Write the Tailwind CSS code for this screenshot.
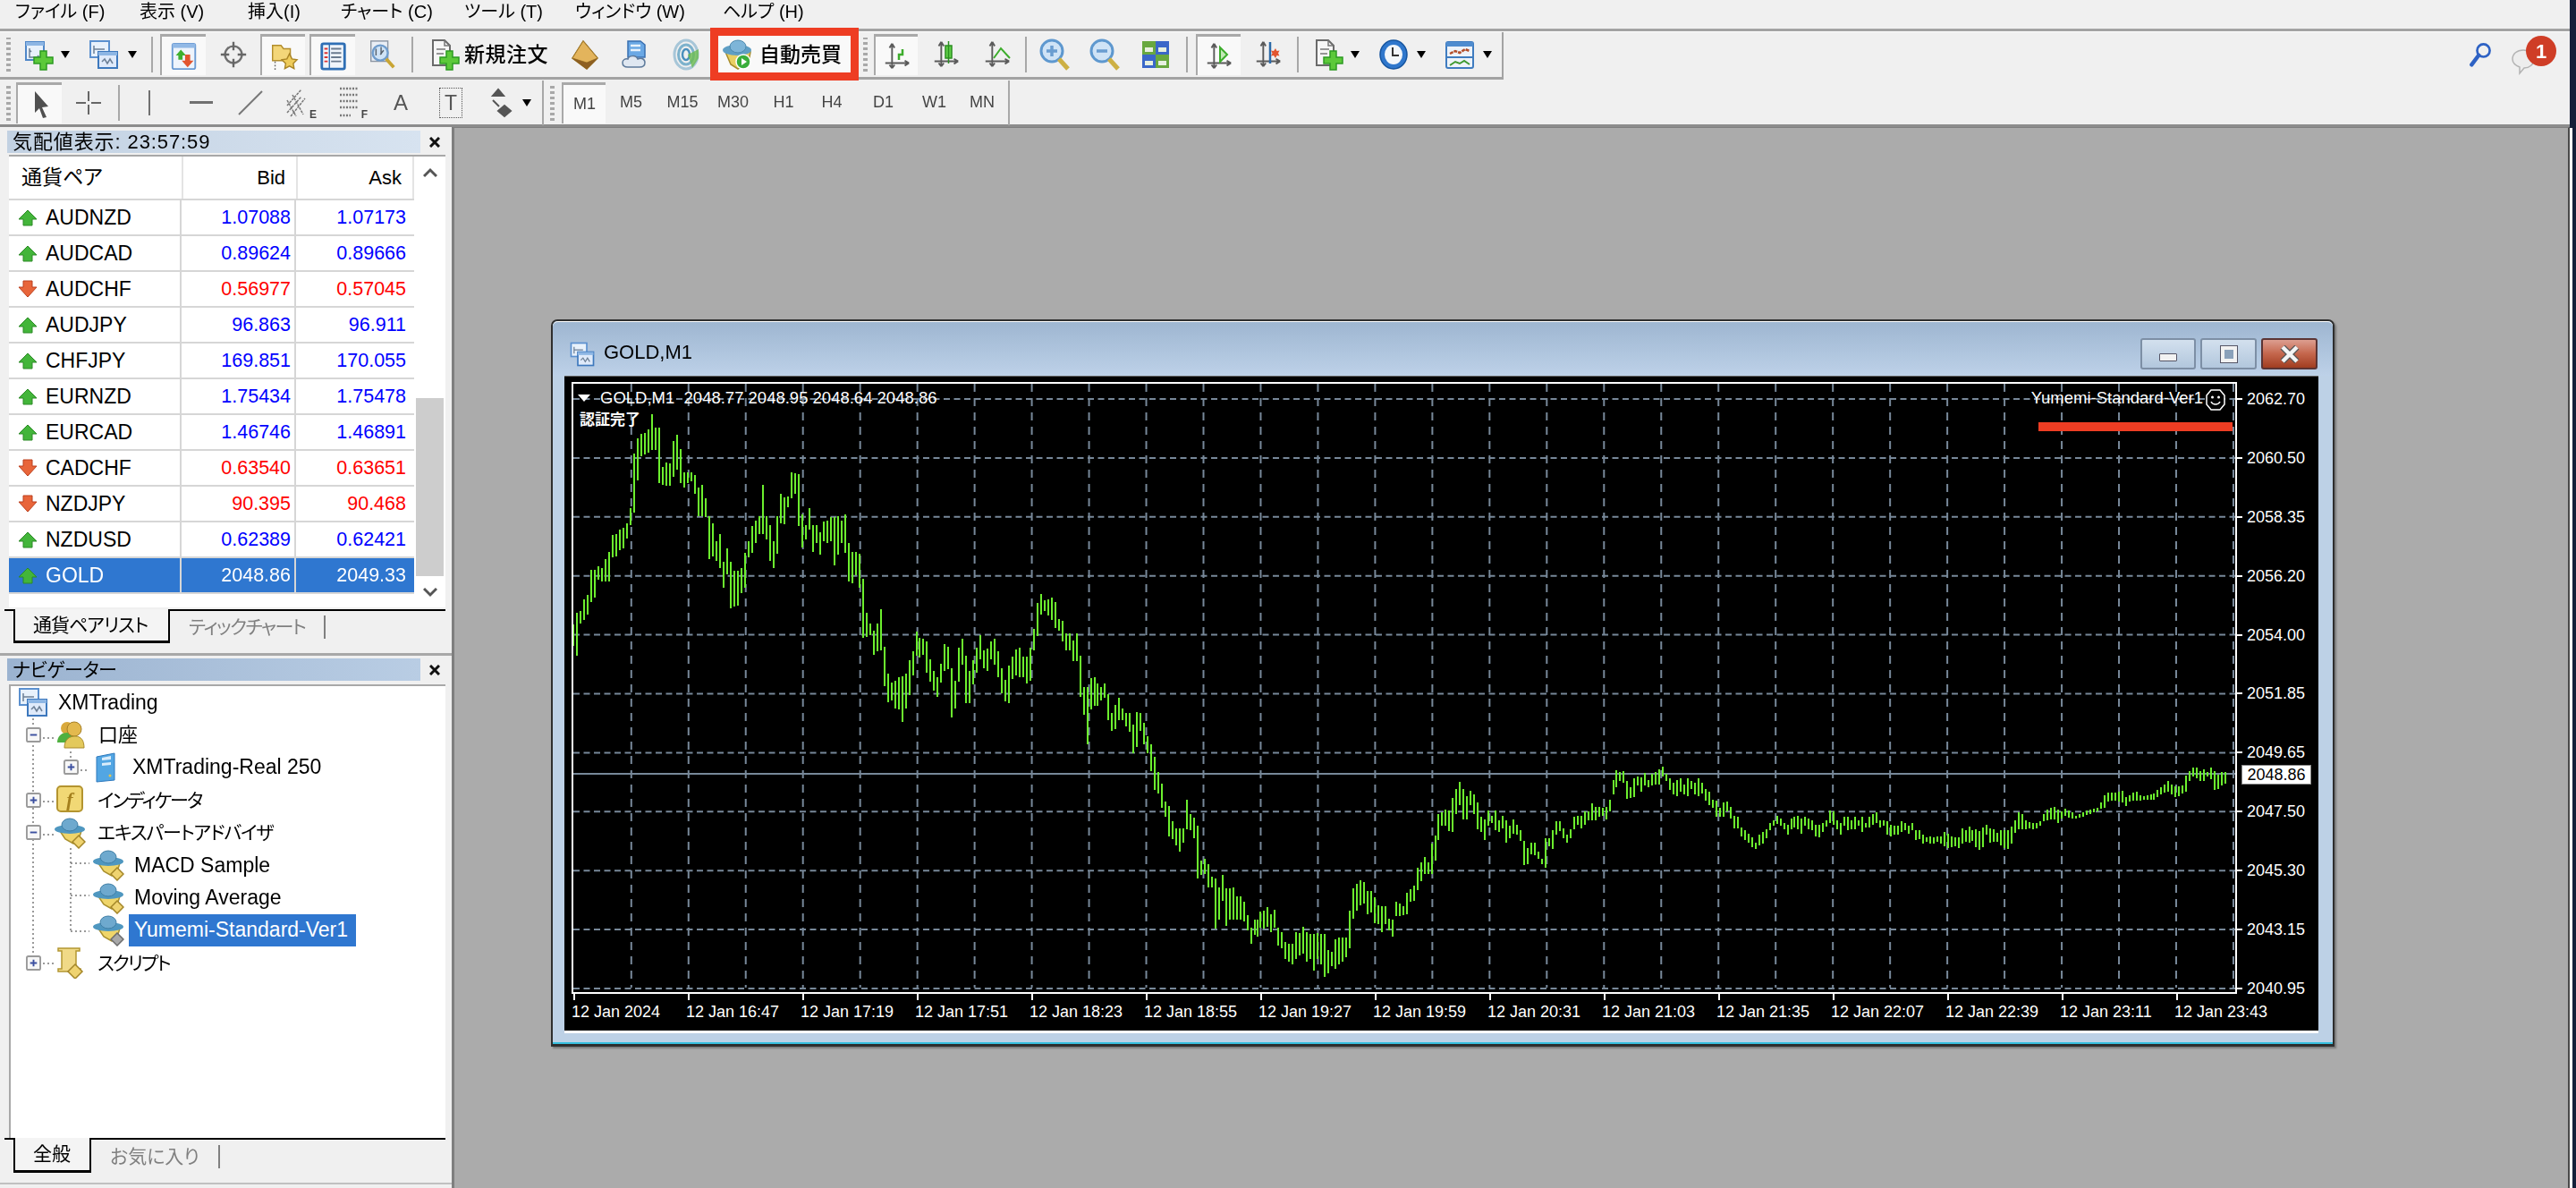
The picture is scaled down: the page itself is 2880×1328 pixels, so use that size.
<!DOCTYPE html>
<html lang="ja">
<head>
<meta charset="UTF-8" />
<title>MetaTrader 4</title>
<script src="https://cdn.jsdelivr.net/npm/@tailwindcss/browser@4"></script>
</head>
<body class="bg-[#f0f0f0]">
<!-- shared icons -->
<svg class="hidden">
  <symbol id="drop" viewBox="0 0 10 8"><path d="M0 0h10L5 8z" fill="#000"/></symbol>
  <symbol id="plus" viewBox="0 0 36 36"><path d="M20 14h7v7h7v7h-7v7h-7v-7h-7v-7h7z" fill="#5cc93a" stroke="#2c9a22" stroke-width="1.5"/></symbol>
  <symbol id="win" viewBox="0 0 36 36"><rect x="4" y="4" width="20" height="20" fill="#e8f1fb" stroke="#4f87c8" stroke-width="2"/><rect x="4" y="4" width="20" height="4" fill="#8db6e4"/><path d="M8 11v10h11M8 13l2 2M17 19l2 2" stroke="#6c7f95" stroke-width="1.5" fill="none"/></symbol>
  <symbol id="win2" viewBox="0 0 36 36"><rect x="3" y="3" width="21" height="18" fill="#e8f1fb" stroke="#5b90cf" stroke-width="2"/><rect x="12" y="15" width="21" height="18" fill="#dfeafa" stroke="#3d78bd" stroke-width="2"/><rect x="12" y="15" width="21" height="4" fill="#8db6e4"/><path d="M7 8v9M7 12h12M16 26l3-3 3 5 3-5 3 5" stroke="#6c7f95" stroke-width="1.5" fill="none"/></symbol>
  <symbol id="mw" viewBox="0 0 36 36"><rect x="4" y="3" width="27" height="30" rx="2" fill="#eef4fc" stroke="#6a9ad3" stroke-width="2"/><rect x="4" y="3" width="27" height="5" fill="#92b9e6"/><path d="M14 10l6 7h-4v5h-5v-5H8z" fill="#3fb12f"/><path d="M19 16h6v7h4l-7 8-7-8h4z" fill="#e2552f"/></symbol>
  <symbol id="cross" viewBox="0 0 36 36"><circle cx="18" cy="18" r="10" fill="none" stroke="#6f6f6f" stroke-width="2.5"/><path d="M18 3v10M18 23v10M3 18h10M23 18h10" stroke="#666" stroke-width="2.5"/></symbol>
  <symbol id="folder" viewBox="0 0 36 36"><path d="M5 5h10l3 4h8v14H5z" fill="#f3d679" stroke="#b28d2c" stroke-width="1.5"/><path d="M25 15l3 6 6 1-4.500 4.500 1 6-5.500-3-5.500 3 1-6L16 22l6-1z" fill="#eecb5a" stroke="#a98425" stroke-width="1.500"/><path d="M8 24v10" stroke="#666" stroke-dasharray="2 2" stroke-width="1.500"/></symbol>
  <symbol id="data" viewBox="0 0 36 36"><rect x="4" y="3" width="27" height="30" rx="2" fill="#f0f5fb" stroke="#2f6fb5" stroke-width="3"/><path d="M13 4v28" stroke="#2f6fb5" stroke-width="1.500"/><path d="M7 9h4M7 14h4M7 19h4M7 24h4" stroke="#d33" stroke-width="2"/><path d="M15 9h12M15 14h12M15 19h12M15 24h12" stroke="#6a7b8f" stroke-width="2"/></symbol>
  <symbol id="tester" viewBox="0 0 36 36"><rect x="5" y="2" width="20" height="24" fill="#e9eef5" stroke="#8c96a3" stroke-width="1.500"/><circle cx="16" cy="16" r="9" fill="#cfe3f6" stroke="#6f9ccc" stroke-width="2.500"/><path d="M23 23l9 10" stroke="#c9a534" stroke-width="4"/><path d="M11 11v8M17 9v9M20 13l-4 5" stroke="#56606c" stroke-width="1.500"/></symbol>
  <symbol id="doc" viewBox="0 0 36 36"><path d="M5 2h13l6 6v22H5z" fill="#f6f6f6" stroke="#6a6a6a" stroke-width="2"/><path d="M18 2v6h6M9 12h10M9 17h8" stroke="#777" stroke-width="1.500" fill="none"/></symbol>
  <symbol id="gem" viewBox="0 0 36 36"><path d="M17 3l16 19-12 12L5 22z" fill="#c9953a" stroke="#8e6418" stroke-width="1.500"/><path d="M17 3L5 22l16 5 12-5z" fill="#e3b45c" stroke="#a9802d" stroke-width="1"/><path d="M5 22l16 12 12-12-12 5z" fill="#8d5f22"/></symbol>
  <symbol id="server" viewBox="0 0 36 36"><path d="M8 3h14l5 4v14H8z" fill="#6aa8e5" stroke="#396fb0" stroke-width="1.500"/><path d="M11 8h11M11 13h11" stroke="#e8f2fc" stroke-width="2.500"/><path d="M8 32c-4 0-6-2-6-5s3-5 6-4c1-4 9-5 11 0 4-2 8 0 8 4s-3 5-6 5z" fill="#dfe7f1" stroke="#5e7a9b" stroke-width="1.500"/></symbol>
  <symbol id="signal" viewBox="0 0 36 36"><ellipse cx="18" cy="18" rx="13" ry="16" fill="none" stroke="#a7c6d8" stroke-width="3"/><ellipse cx="18" cy="18" rx="8.500" ry="11" fill="none" stroke="#7db2cc" stroke-width="3"/><ellipse cx="18" cy="18" rx="4" ry="6" fill="none" stroke="#4b90bd" stroke-width="2.500"/><path d="M20 18l12-6v10l-7 11z" fill="#6cbb50" opacity=".8"/></symbol>
  <symbol id="auto" viewBox="0 0 36 36"><path d="M5 15l6 14 8 5 12-8 2-11z" fill="#e9cf63" stroke="#a78c2b" stroke-width="1.500"/><ellipse cx="18" cy="13" rx="16" ry="6" fill="#5f9fc5"/><ellipse cx="19" cy="9" rx="9" ry="7" fill="#7eb5d8" stroke="#4c88ad"/><circle cx="25" cy="26" r="8" fill="#3aae3c" stroke="#fff" stroke-width="1.500"/><path d="M23 22l6 4-6 4z" fill="#fff"/></symbol>
  <symbol id="hat" viewBox="0 0 36 36"><path d="M7 16l6 9 9 5 7-8 2-6z" fill="#efd56a" stroke="#a9902e" stroke-width="1.500"/><ellipse cx="18" cy="14" rx="17" ry="5" fill="#4f97c0"/><ellipse cx="18" cy="9" rx="9" ry="7" fill="#6ea9ce" stroke="#3f7ea5"/></symbol>
  <symbol id="diamond" viewBox="0 0 16 16"><path d="M8 1l7 7-7 7-7-7z" fill="#efd370" stroke="#a48628" stroke-width="1.500"/></symbol>
  <symbol id="diamondg" viewBox="0 0 16 16"><path d="M8 1l7 7-7 7-7-7z" fill="#a8a8a8" stroke="#6c6c6c" stroke-width="1.500"/></symbol>
  <symbol id="ax" viewBox="0 0 36 36"><path d="M12 3v28M4 26h28M12 3l-3 5M12 3l3 5M32 26l-5-3M32 26l-5 3M12 32l-3-4M12 32l3-4" stroke="#5a5a5a" stroke-width="2" fill="none"/></symbol>
  <symbol id="mag" viewBox="0 0 36 36"><ellipse cx="14" cy="14" rx="12" ry="12" fill="#cfe3f6" stroke="#5e98cf" stroke-width="3"/><path d="M22 23l10 11" stroke="#cdb044" stroke-width="5"/></symbol>
  <symbol id="tile" viewBox="0 0 36 36"><rect x="3" y="3" width="15" height="15" fill="#68a83f"/><rect x="18" y="3" width="15" height="15" fill="#3a67c9"/><rect x="3" y="18" width="15" height="15" fill="#3a67c9"/><rect x="18" y="18" width="15" height="15" fill="#68a83f"/><path d="M6 10h9v5H6zM21 10h9v5h-9zM6 25h9v5H6zM21 25h9v5h-9z" fill="#e7f0e0"/></symbol>
  <symbol id="clock" viewBox="0 0 36 36"><ellipse cx="18" cy="18" rx="15" ry="16" fill="#2f77cc" stroke="#15549f" stroke-width="1.500"/><ellipse cx="18" cy="18" rx="10" ry="11" fill="#f2f6fa"/><path d="M17 10v9h7" stroke="#333" stroke-width="2" fill="none"/></symbol>
  <symbol id="tpl" viewBox="0 0 36 36"><rect x="3" y="4" width="30" height="29" rx="2" fill="#eef3f9" stroke="#3f7cc0" stroke-width="2"/><rect x="3" y="4" width="30" height="5" fill="#4f8ccf"/><path d="M3 21h30" stroke="#3f7cc0" stroke-width="2"/><path d="M7 17l6-3 5 2 6-4 5 2" stroke="#b24d2a" stroke-width="2.500" fill="none" stroke-dasharray="4 1"/><path d="M7 30l6-4 5 2 5-3 6 4" stroke="#3f9a32" stroke-width="2" fill="none"/></symbol>
  <symbol id="up" viewBox="0 0 24 24"><path d="M12 4l10 10h-5v7H7v-7H2z" fill="#43b53a" stroke="#2c8a27" stroke-width="1"/></symbol>
  <symbol id="down" viewBox="0 0 24 24"><path d="M7 3h10v7h5L12 21 2 10h5z" fill="#e8653a" stroke="#bb3f1c" stroke-width="1"/></symbol>
  <symbol id="boxplus" viewBox="0 0 18 18"><rect x="1" y="1" width="16" height="16" rx="2" fill="#f7f7f7" stroke="#9a9a9a" stroke-width="2"/><path d="M5 9h8M9 5v8" stroke="#3c50a0" stroke-width="2"/></symbol>
  <symbol id="boxminus" viewBox="0 0 18 18"><rect x="1" y="1" width="16" height="16" rx="2" fill="#f7f7f7" stroke="#9a9a9a" stroke-width="2"/><path d="M5 9h8" stroke="#3c50a0" stroke-width="2"/></symbol>
</svg>

<div class="w-[2880px] h-[1328px] overflow-hidden flex text-black blur-[0.4px] [font-family:'Liberation_Sans','Noto_Sans_CJK_JP',sans-serif] [font-feature-settings:'palt']">
  <div class="w-[2873px] flex flex-col">

    <!-- menu -->
    <div class="h-[32px] flex items-center text-[20px] leading-none pl-[17px] pb-[6px]">
      <span class="w-[139px]">ファイル (F)</span>
      <span class="w-[121px]">表示 (V)</span>
      <span class="w-[104px]">挿入(I)</span>
      <span class="w-[138px]">チャート (C)</span>
      <span class="w-[124px]">ツール (T)</span>
      <span class="w-[165px]">ウィンドウ (W)</span>
      <span>ヘルプ (H)</span>
    </div>
    <div class="h-[4px] bg-[#a3a3a3] border-b border-white"></div>

    <!-- toolbar 1 -->
    <div class="h-[54px] flex">
      <div class="w-[1681px] h-[53px] flex items-center border-r-2 border-b-[3px] border-[#a3a3a3]">
        <div class="w-[18px] flex justify-center"><div class="w-[5px] h-[38px] bg-[repeating-linear-gradient(0deg,#a8a8a8_0_3px,transparent_3px_6px)]"></div></div>
        <span class="ml-[7px] w-[36px] h-[36px] relative"><svg class="w-[36px] h-[36px] absolute"><use href="#win"/></svg><svg class="w-[36px] h-[36px] absolute"><use href="#plus"/></svg></span>
        <svg class="ml-[7px] w-[10px] h-[8px]"><use href="#drop"/></svg>
        <svg class="ml-[20px] w-[36px] h-[36px]"><use href="#win2"/></svg>
        <svg class="ml-[9px] w-[10px] h-[8px]"><use href="#drop"/></svg>
        <div class="ml-[16px] w-[2px] h-[40px] bg-[#a8a8a8]"></div>
        <div class="ml-[8px] w-[51px] h-[46px] flex items-center justify-center bg-[#f9f9f9] border-t-[3px] border-l-2 border-[#a9a9a9]"><svg class="w-[34px] h-[34px]"><use href="#mw"/></svg></div>
        <div class="ml-[5px] w-[51px] h-[46px] flex items-center justify-center"><svg class="w-[34px] h-[34px]"><use href="#cross"/></svg></div>
        <div class="ml-[5px] w-[50px] h-[46px] flex items-center justify-center bg-[#f9f9f9] border-t-[3px] border-l-2 border-[#a9a9a9]"><svg class="w-[34px] h-[34px]"><use href="#folder"/></svg></div>
        <div class="ml-[5px] w-[51px] h-[46px] flex items-center justify-center bg-[#f9f9f9] border-t-[3px] border-l-2 border-[#a9a9a9]"><svg class="w-[34px] h-[34px]"><use href="#data"/></svg></div>
        <div class="ml-[5px] w-[50px] h-[46px] flex items-center justify-center"><svg class="w-[34px] h-[34px]"><use href="#tester"/></svg></div>
        <div class="ml-[8px] w-[2px] h-[40px] bg-[#a8a8a8]"></div>
        <span class="ml-[17px] w-[36px] h-[36px] relative"><svg class="w-[36px] h-[36px] absolute"><use href="#doc"/></svg><svg class="w-[36px] h-[36px] absolute"><use href="#plus"/></svg></span>
        <span class="ml-[4px] w-[95px] text-[23px] leading-none font-medium whitespace-nowrap tracking-[0.5px]">新規注文</span>
        <svg class="ml-[21px] w-[36px] h-[36px]"><use href="#gem"/></svg>
        <svg class="ml-[23px] w-[36px] h-[36px]"><use href="#server"/></svg>
        <svg class="ml-[19px] w-[36px] h-[36px]"><use href="#signal"/></svg>
        <!-- highlighted button -->
        <div class="ml-[9px] w-[166px] h-[53px] relative flex items-center bg-[#f9f9f9] pl-[12px]">
          <svg class="w-[36px] h-[36px]"><use href="#auto"/></svg>
          <span class="ml-[7px] text-[23px] leading-none font-medium whitespace-nowrap">自動売買</span>
          <div class="absolute left-0 right-0 top-[-4px] h-[59px] border-[9px] border-[#ee3d23]"></div>
        </div>
        <div class="w-[14px] flex justify-center"><div class="w-[5px] h-[38px] bg-[repeating-linear-gradient(0deg,#a8a8a8_0_3px,transparent_3px_6px)]"></div></div>
        <div class="ml-[3px] w-[49px] h-[46px] flex items-center justify-center bg-[#f9f9f9] border-t-[3px] border-l-2 border-[#a9a9a9] relative"><svg class="w-[34px] h-[36px]"><use href="#ax"/><path d="M19 22v-6h4v-6" stroke="#3dad2c" stroke-width="2.500" fill="none"/></svg></div>
        <div class="ml-[7px] w-[50px] h-[46px] flex items-center justify-center"><svg class="w-[34px] h-[36px]"><use href="#ax"/><rect x="16" y="8" width="7" height="14" fill="#62d04a" stroke="#2b8f21" stroke-width="1.500"/><path d="M19.500 3v25" stroke="#2b8f21" stroke-width="1.500"/></svg></div>
        <div class="ml-[7px] w-[50px] h-[46px] flex items-center justify-center"><svg class="w-[34px] h-[36px]"><use href="#ax"/><path d="M13 22l8-11 10 11" stroke="#3dad2c" stroke-width="2" fill="none"/></svg></div>
        <div class="ml-[6px] w-[2px] h-[40px] bg-[#a8a8a8]"></div>
        <div class="ml-[7px] w-[50px] h-[46px] flex items-center justify-center"><svg class="w-[36px] h-[36px]"><use href="#mag"/><path d="M8 14h12M14 8v12" stroke="#6a9dd0" stroke-width="3.500"/></svg></div>
        <div class="ml-[6px] w-[50px] h-[46px] flex items-center justify-center"><svg class="w-[36px] h-[36px]"><use href="#mag"/><path d="M8 14h12" stroke="#6a9dd0" stroke-width="3.500"/></svg></div>
        <div class="ml-[6px] w-[50px] h-[46px] flex items-center justify-center"><svg class="w-[36px] h-[36px]"><use href="#tile"/></svg></div>
        <div class="ml-[9px] w-[2px] h-[40px] bg-[#a8a8a8]"></div>
        <div class="ml-[9px] w-[50px] h-[46px] flex items-center justify-center bg-[#f9f9f9] border-t-[3px] border-l-2 border-[#a9a9a9]"><svg class="w-[34px] h-[36px]"><use href="#ax"/><path d="M18 8l8 8-8 8z" fill="#c4e8b8" stroke="#3dad2c" stroke-width="2"/></svg></div>
        <div class="ml-[6px] w-[50px] h-[46px] flex items-center justify-center"><svg class="w-[34px] h-[36px]"><use href="#ax"/><path d="M19 4v24" stroke="#2c6aa8" stroke-width="2.500"/><path d="M25 11l1.500 3 3-.5-1.500 3 1.500 3-3-.5-1.500 3-2-3-3 .5 1.500-3-1.500-3 3 .5z" fill="#e2552f"/></svg></div>
        <div class="ml-[7px] w-[2px] h-[40px] bg-[#a8a8a8]"></div>
        <span class="ml-[15px] w-[36px] h-[36px] relative"><svg class="w-[36px] h-[36px] absolute"><use href="#doc"/></svg><svg class="w-[36px] h-[36px] absolute"><use href="#plus"/></svg></span>
        <svg class="ml-[7px] w-[10px] h-[8px]"><use href="#drop"/></svg>
        <svg class="ml-[20px] w-[36px] h-[36px]"><use href="#clock"/></svg>
        <svg class="ml-[8px] w-[10px] h-[8px]"><use href="#drop"/></svg>
        <svg class="ml-[20px] w-[36px] h-[36px]"><use href="#tpl"/></svg>
        <svg class="ml-[8px] w-[10px] h-[8px]"><use href="#drop"/></svg>
      </div>
      <div class="flex-1 flex items-start">
        <svg class="ml-[1077px] mt-[9px] w-[30px] h-[30px]" viewBox="0 0 34 34"><circle cx="21" cy="13" r="8" fill="none" stroke="#2e62c4" stroke-width="3"/><path d="M15 19L6 31" stroke="#2e62c4" stroke-width="5" stroke-linecap="round"/></svg>
        <div class="ml-[18px] mt-[4px] w-[56px] h-[44px] relative">
          <svg class="absolute left-0 top-[14px] w-[30px] h-[30px]" viewBox="0 0 30 30"><path d="M15 2c7 0 12 4 12 10s-5 10-11 10l-5 6v-7C6 19 3 16 3 12 3 6 8 2 15 2z" fill="#ededed" stroke="#b3b3b3" stroke-width="1.500"/></svg>
          <span class="absolute left-[18px] top-0 w-[34px] h-[34px] rounded-full bg-[#cf3d26] text-white text-[22px] font-bold flex items-center justify-center">1</span>
        </div>
      </div>
    </div>

    <!-- toolbar 2 -->
    <div class="h-[52px] flex items-center border-b-[3px] border-[#8c8c8c] text-[18px] text-[#444]">
      <div class="w-[18px] flex justify-center"><div class="w-[5px] h-[40px] bg-[repeating-linear-gradient(0deg,#a8a8a8_0_3px,transparent_3px_6px)]"></div></div>
      <div class="w-[51px] h-[46px] flex items-center justify-center bg-[#f9f9f9] border-t-[3px] border-l-2 border-[#a9a9a9]"><svg class="w-[30px] h-[36px]" viewBox="0 0 30 36"><path d="M9 4l15 17-7 1 5 11-4 1-4-11-5 5z" fill="#505050"/></svg></div>
      <div class="ml-[5px] w-[50px] h-[46px] flex items-center justify-center"><svg class="w-[34px] h-[34px]" viewBox="0 0 34 34"><path d="M17 4v11M17 19v11M3 17h11M20 17h11" stroke="#666" stroke-width="2"/></svg></div>
      <div class="ml-[8px] w-[2px] h-[40px] bg-[#a8a8a8]"></div>
      <div class="ml-[8px] w-[50px] flex justify-center"><div class="w-[2px] h-[28px] bg-[#707070]"></div></div>
      <div class="ml-[8px] w-[50px] flex justify-center"><div class="w-[26px] h-[3px] bg-[#707070]"></div></div>
      <div class="ml-[5px] w-[50px] flex justify-center"><svg class="w-[30px] h-[30px]" viewBox="0 0 30 30"><path d="M2 28L28 2" stroke="#777" stroke-width="2"/></svg></div>
      <div class="ml-[4px] w-[50px] flex justify-center relative"><svg class="w-[34px] h-[38px]" viewBox="0 0 34 38"><path d="M4 22L20 4M4 30L20 12M8 34L24 14M10 10l12 22M4 16l10 18" stroke="#777" stroke-width="1.500" stroke-dasharray="3 1" fill="none"/></svg><span class="absolute right-[5px] bottom-0 text-[12px] font-bold leading-none">E</span></div>
      <div class="ml-[8px] w-[50px] flex justify-center relative"><svg class="w-[30px] h-[38px]" viewBox="0 0 30 38"><path d="M3 3h20M3 10h20M3 17h20M3 24h20M3 33h12" stroke="#777" stroke-width="2.500" stroke-dasharray="2 1.500"/></svg><span class="absolute right-[6px] bottom-0 text-[12px] font-bold leading-none">F</span></div>
      <div class="ml-[6px] w-[50px] text-center text-[24px] leading-none text-[#555]">A</div>
      <div class="ml-[6px] w-[50px] flex justify-center"><span class="w-[26px] h-[34px] border border-dotted border-[#555] text-[23px] leading-[32px] text-center text-[#555]">T</span></div>
      <div class="ml-[13px] w-[36px] flex justify-center"><svg class="w-[30px] h-[34px]" viewBox="0 0 30 34"><path d="M12 2l6 7H6zM6 14l7 7M19 20l7 6-7 6-7-6z" fill="#555" stroke="#555" stroke-width="2"/></svg></div>
      <svg class="ml-[6px] w-[10px] h-[8px]"><use href="#drop"/></svg>
      <div class="ml-[12px] w-[2px] h-[50px] bg-[#a8a8a8]"></div>
      <div class="ml-[3px] w-[12px] flex justify-center"><div class="w-[5px] h-[40px] bg-[repeating-linear-gradient(0deg,#a8a8a8_0_3px,transparent_3px_6px)]"></div></div>
      <div class="ml-[5px] w-[49px] h-[46px] flex items-center justify-center bg-[#f9f9f9] border-t-[3px] border-l-2 border-[#a9a9a9]">M1</div>
      <span class="w-[57px] text-center">M5</span>
      <span class="w-[58px] text-center">M15</span>
      <span class="w-[55px] text-center">M30</span>
      <span class="w-[58px] text-center">H1</span>
      <span class="w-[50px] text-center">H4</span>
      <span class="w-[65px] text-center">D1</span>
      <span class="w-[49px] text-center">W1</span>
      <span class="w-[58px] text-center">MN</span>
      <div class="w-[2px] h-[50px] bg-[#a8a8a8]"></div>
    </div>

    <!-- body -->
    <div class="flex-1 flex min-h-0">
      <!-- left panels -->
      <div class="w-[505px] flex flex-col pt-[4px]">
        <!-- market watch -->
        <div class="h-[25px] flex items-center">
          <div class="ml-[8px] w-[462px] h-[25px] pl-[6px] flex items-center text-[22px] tracking-[0.9px] leading-none bg-linear-to-r from-[#c2d1e2] to-[#d7e3f0]">気配値表示: 23:57:59</div>
          <svg class="ml-[10px] w-[12px] h-[12px]" viewBox="0 0 12 12"><path d="M1 1l10 10M11 1L1 11" stroke="#111" stroke-width="3"/></svg>
        </div>
        <div class="ml-[10px] mt-[2px] w-[488px] h-[506px] bg-white border-t-2 border-[#a8a8a8] flex">
          <div class="w-[453px]">
            <div class="h-[49px] grid grid-cols-[195px_128px_130px] text-[22px] border-b-2 border-[#d6d6d6]">
              <span class="flex items-center pl-[14px] border-r-2 border-[#e4e4e4] text-[23px]">通貨ペア</span>
              <span class="flex items-center justify-end pr-[12px] border-r-2 border-[#e4e4e4]">Bid</span>
              <span class="flex items-center justify-end pr-[12px] border-r-2 border-[#e4e4e4]">Ask</span>
            </div>
            <div id="quotes"></div>
          </div>
          <div class="w-[31px] ml-[2px] flex flex-col items-center relative">
            <svg class="mt-[12px] w-[16px] h-[12px]" viewBox="0 0 16 12"><path d="M1 10l7-7 7 7" stroke="#555" stroke-width="3" fill="none"/></svg>
            <div class="w-full h-[199px] mt-[246px] bg-[#cdcdcd]"></div>
            <svg class="mt-[12px] w-[16px] h-[12px]" viewBox="0 0 16 12"><path d="M1 2l7 7 7-7" stroke="#555" stroke-width="3" fill="none"/></svg>
          </div>
        </div>
        <!-- tabs -->
        <div class="ml-[5px] h-[38px] flex text-[21px] mt-[2px]">
          <div class="w-[10px] border-t-2 border-black"></div>
          <div class="w-[175px] h-[38px] border-x-2 border-b-[3px] border-black flex items-center pl-[20px] bg-[#f4f4f4] tracking-[-1px]">通貨ペアリスト</div>
          <div class="w-[308px] border-t-2 border-black flex items-center text-[#808080]"><span class="ml-[21px] w-[151px] tracking-[-1.500px] whitespace-nowrap">ティックチャート</span><span class="w-[2px] h-[26px] bg-[#808080]"></span></div>
        </div>
        <div class="mt-[11px] h-[3px] bg-[#a8a8a8]"></div>
        <!-- navigator -->
        <div class="mt-[3px] h-[25px] flex items-center">
          <div class="ml-[8px] w-[462px] h-[25px] pl-[6px] flex items-center text-[21px] tracking-[-0.500px] leading-none bg-linear-to-r from-[#9bb3d0] to-[#b9cde4]">ナビゲーター</div>
          <svg class="ml-[10px] w-[12px] h-[12px]" viewBox="0 0 12 12"><path d="M1 1l10 10M11 1L1 11" stroke="#111" stroke-width="3"/></svg>
        </div>
        <div class="ml-[10px] mt-[4px] w-[488px] h-[507px] bg-white border-t-2 border-l-2 border-[#a8a8a8] relative text-[23px] leading-none">
          <svg class="absolute inset-0 w-[486px] h-[505px]" viewBox="12 769 486 505" fill="none" stroke="#7a7a7a" stroke-width="1.500" stroke-dasharray="2 3">
            <path d="M37 805V1070M79 842V852M79 950V1043M48 827H60M90 863H100M48 898H60M48 935H60M79 967H100M79 1003H100M79 1043H100M48 1079H60"/>
          </svg>
          <div class="h-[36.4px] flex items-center pl-[7px] relative"><svg class="w-[36px] h-[36px]"><use href="#win2"/></svg><span class="ml-[10px]">XMTrading</span></div>
          <div class="h-[36.4px] flex items-center pl-[17px] relative"><svg class="w-[17px] h-[17px]"><use href="#boxminus"/></svg><svg class="ml-[14px] w-[36px] h-[36px]" viewBox="0 0 36 36"><circle cx="15" cy="10" r="7" fill="#d9a93c"/><path d="M4 26c0-8 6-11 11-11s9 3 9 11z" fill="#4fb040"/><circle cx="23" cy="11" r="8" fill="#e3b94e" stroke="#a67f26"/><path d="M12 32c0-9 5-13 12-13s10 5 10 13z" fill="#e3c95c" stroke="#a98a2a"/></svg><span class="ml-[14px] text-[22px]">口座</span></div>
          <div class="h-[36.4px] flex items-center pl-[59px] relative"><svg class="w-[17px] h-[17px]"><use href="#boxplus"/></svg><svg class="ml-[13px] w-[36px] h-[36px]" viewBox="0 0 36 36"><path d="M7 6l20-4v30l-20 2z" fill="#52a6e3" stroke="#2f79bd"/><path d="M13 7l10-2v4l-10 1zM13 13l10-1v3l-10 1z" fill="#d9ecfa"/><circle cx="22" cy="27" r="1.500" fill="#e7c54d"/></svg><span class="ml-[11px]">XMTrading-Real 250</span></div>
          <div class="h-[36.4px] flex items-center pl-[17px] relative"><svg class="w-[17px] h-[17px]"><use href="#boxplus"/></svg><svg class="ml-[14px] w-[36px] h-[36px]" viewBox="0 0 36 36"><rect x="4" y="3" width="28" height="28" rx="4" fill="#f1d875" stroke="#b3942f" stroke-width="2"/><text x="18" y="25" text-anchor="middle" font-size="22" font-style="italic" font-weight="700" fill="#a47f1c" font-family="Liberation Serif">f</text></svg><span class="ml-[13px] text-[21px] tracking-[-2px]">インディケータ</span></div>
          <div class="h-[36.4px] flex items-center pl-[17px] relative"><svg class="w-[17px] h-[17px]"><use href="#boxminus"/></svg><span class="ml-[14px] w-[36px] h-[36px] relative"><svg class="w-[36px] h-[36px] absolute"><use href="#hat"/></svg><svg class="w-[16px] h-[16px] absolute right-0 bottom-0"><use href="#diamond"/></svg></span><span class="ml-[13px] text-[21px] tracking-[-1.200px]">エキスパートアドバイザ</span></div>
          <div class="h-[36.4px] flex items-center pl-[91px] relative"><span class="w-[36px] h-[36px] relative"><svg class="w-[36px] h-[36px] absolute"><use href="#hat"/></svg><svg class="w-[16px] h-[16px] absolute right-0 bottom-0"><use href="#diamond"/></svg></span><span class="ml-[11px]">MACD Sample</span></div>
          <div class="h-[36.4px] flex items-center pl-[91px] relative"><span class="w-[36px] h-[36px] relative"><svg class="w-[36px] h-[36px] absolute"><use href="#hat"/></svg><svg class="w-[16px] h-[16px] absolute right-0 bottom-0"><use href="#diamond"/></svg></span><span class="ml-[11px]">Moving Average</span></div>
          <div class="h-[36.4px] flex items-center pl-[91px] relative"><span class="w-[36px] h-[36px] relative"><svg class="w-[36px] h-[36px] absolute"><use href="#hat"/></svg><svg class="w-[16px] h-[16px] absolute right-0 bottom-0"><use href="#diamondg"/></svg></span><span class="ml-[5px] h-[36px] w-[254px] px-[6px] flex items-center bg-[#2f77d0] text-white">Yumemi-Standard-Ver1</span></div>
          <div class="h-[36.4px] flex items-center pl-[17px] relative"><svg class="w-[17px] h-[17px]"><use href="#boxplus"/></svg><svg class="ml-[14px] w-[36px] h-[36px]" viewBox="0 0 36 36"><path d="M5 2h24v3h-4v20h5v3H5v-3h4V5H5z" fill="#f0d987" stroke="#b39632" stroke-width="1.500"/><path d="M24 20l8 8-8 8-8-8z" fill="#efd370" stroke="#a48628" stroke-width="1.500"/></svg><span class="ml-[13px] text-[21px] tracking-[-2px]">スクリプト</span></div>
        </div>
        <!-- tabs -->
        <div class="ml-[5px] h-[39px] flex text-[21px]">
          <div class="w-[10px] border-t-2 border-black"></div>
          <div class="w-[87px] h-[39px] border-x-2 border-b-[3px] border-black flex items-center pl-[20px] bg-[#f4f4f4]">全般</div>
          <div class="w-[396px] border-t-2 border-black flex items-center text-[#808080]"><span class="ml-[21px] w-[121px] whitespace-nowrap">お気に入り</span><span class="w-[2px] h-[26px] bg-[#808080]"></span></div>
        </div>
        <div class="mt-[11px] h-[2px] bg-[#c0c0c0]"></div>
      </div>

      <!-- workspace -->
      <div class="flex-1 relative bg-[#ababab] border-l-[3px] border-t border-l-[#7f7f7f] border-t-[#7f7f7f] border-r-2 border-r-[#4a4a4a]">
        <!-- chart window -->
        <div class="absolute left-[108px] top-[214px] w-[1994px] h-[813px] rounded-t-[7px] border-2 border-[#2e2e2e] border-b-[3px] bg-[#bdd1e6] flex flex-col shadow-[2px_2px_2px_rgba(70,70,70,0.5)]">
          <div class="h-[61px] flex items-start pt-[18px] pl-[18px] pr-[17px] rounded-t-[6px] border-t border-white bg-linear-to-b from-[#9eb6d1] to-[#bdd1e8]">
            <svg class="w-[30px] h-[30px] mt-[3px]"><use href="#win2"/></svg>
            <span class="ml-[9px] mt-[2px] text-[22px] leading-[28px]">GOLD,M1</span>
            <div class="ml-auto flex gap-[5px]">
              <div class="w-[62px] h-[35px] rounded-[3px] border-2 border-[#7d8fa5] bg-linear-to-b from-[#d3e0ee] to-[#b2c7dd] flex items-end justify-center pb-[7px]"><span class="w-[20px] h-[9px] rounded-[1px] border border-[#556] bg-[#f2f2f2]"></span></div>
              <div class="w-[63px] h-[35px] rounded-[3px] border-2 border-[#7d8fa5] bg-linear-to-b from-[#d3e0ee] to-[#b2c7dd] flex items-center justify-center"><span class="w-[18px] h-[18px] border-[4px] border-[#f2f2f2] outline outline-[#556] bg-[#8aa1ba]"></span></div>
              <div class="w-[63px] h-[35px] rounded-[3px] border-2 border-[#5b3434] bg-linear-to-b from-[#dc9e90] via-[#c4664c] to-[#a13d20] flex items-center justify-center"><svg class="w-[22px] h-[20px]" viewBox="0 0 22 20"><path d="M3 2l16 16M19 2L3 18" stroke="#555" stroke-width="7"/><path d="M3 2l16 16M19 2L3 18" stroke="#f4f4f4" stroke-width="4.500"/></svg></div>
            </div>
          </div>
          <!-- chart -->
          <div class="ml-[13px] w-[1961px] h-[732px] bg-black border-t border-[#666] pl-[8px] pt-[6px] text-white text-[18px] leading-none flex relative">
            <div class="w-[1862px]">
              <div class="w-[1862px] h-[684px] border-2 border-white relative">
                <svg id="chart" class="w-[1858px] h-[680px] block" viewBox="641 429 1858 680"></svg>
                <div class="absolute left-[5px] top-[7px] flex items-center"><svg class="w-[14px] h-[8px]" viewBox="0 0 14 8"><path d="M0 0h14L7 8z" fill="#fff"/></svg><span class="ml-[11px] text-[18.500px]">GOLD,M1&nbsp;&nbsp;2048.77 2048.95 2048.64 2048.86</span></div>
                <div class="absolute left-[7px] top-[32px] text-[17px] font-bold">認証完了</div>
                <div class="absolute right-[36px] top-[7px] flex items-center"><span class="text-[18.500px]">Yumemi-Standard-Ver1</span></div>
                <svg class="absolute right-[10px] top-[5px] w-[24px] h-[26px]" viewBox="0 0 24 26"><path d="M7 2h10l5 6v10l-5 6H7l-5-6V8z" fill="#000" stroke="#fff" stroke-width="1.500"/><circle cx="8.500" cy="10" r="1.500" fill="#fff"/><circle cx="15.500" cy="10" r="1.500" fill="#fff"/><path d="M7 15c2 4 8 4 10 0" stroke="#fff" stroke-width="1.500" fill="none"/></svg>
                <div class="absolute left-[1638px] top-[43px] w-[217px] h-[10px] bg-[#ee3d23]"></div>
              </div>
              <!-- time axis -->
              <div id="times" class="flex h-[40px] pl-[2px]"></div>
            </div>
            <!-- price axis -->
            <div id="prices" class="w-[91px] flex flex-col -mt-[14px]"></div>
            <div class="absolute left-[1875px] top-[434px] w-[78px] h-[22px] bg-white border border-[#888] text-black flex items-center justify-center">2048.86</div>
          </div>
          <div class="ml-[13px] w-[1961px] h-[3px] bg-white"></div>
          <div class="flex-1 border-b-2 border-[#37c0df]"></div>
        </div>
      </div>
    </div>
  </div>
  <!-- desktop edge -->
  <div class="w-[7px] flex flex-col">
    <div class="h-[143px] bg-[#14203a]"></div>
    <div class="flex-1 bg-[#14203a] border-l-[3px] border-white"></div>
  </div>
</div>

<script>
  // quote rows
  const quotes = [
    ["AUDNZD","1.07088","1.07173",1],["AUDCAD","0.89624","0.89666",1],["AUDCHF","0.56977","0.57045",0],
    ["AUDJPY","96.863","96.911",1],["CHFJPY","169.851","170.055",1],["EURNZD","1.75434","1.75478",1],
    ["EURCAD","1.46746","1.46891",1],["CADCHF","0.63540","0.63651",0],["NZDJPY","90.395","90.468",0],
    ["NZDUSD","0.62389","0.62421",1],["GOLD","2048.86","2049.33",1]
  ];
  document.getElementById("quotes").innerHTML = quotes.map((q, i) => {
    const gold = i === 10;
    const row = gold ? "bg-[#2f77d0] text-white" : (q[3] ? "text-[#0000ff]" : "text-[#ff0000]");
    const sym = gold ? "text-white" : "text-black";
    return `<div class="h-[40px] grid grid-cols-[193px_128px_130px] border-b-2 border-[#d6d6d6] ${row}">
      <span class="flex items-center pl-[9px] border-r-2 border-[#d6d6d6] ${sym} text-[23px]"><svg class="w-[24px] h-[24px]"><use href="#${q[3] ? "up" : "down"}"/></svg><span class="ml-[8px]">${q[0]}</span></span>
      <span class="flex items-center justify-end pr-[4px] border-r-2 border-[#d6d6d6] text-[21.5px]">${q[1]}</span>
      <span class="flex items-center justify-end pr-[7px] text-[21.5px]">${q[2]}</span></div>`;
  }).join("");

  // time axis
  const times = ["2024","16:47","17:19","17:51","18:23","18:55","19:27","19:59","20:31","21:03","21:35","22:07","22:39","23:11","23:43"];
  document.getElementById("times").innerHTML = times.map(t =>
    `<div class="w-[128px] shrink-0"><div class="w-[2px] h-[7px] bg-white"></div><div class="mt-[4px] -ml-[2px] whitespace-nowrap">12 Jan ${t}</div></div>`).join("");

  // price axis
  const prices = ["2062.70","2060.50","2058.35","2056.20","2054.00","2051.85","2049.65","2047.50","2045.30","2043.15","2040.95"];
  document.getElementById("prices").innerHTML = prices.map(p =>
    `<div class="h-[65.9px] shrink-0 flex items-center"><span class="w-[6px] h-[2px] bg-white"></span><span class="ml-[5px]">${p}</span></div>`).join("");

  // bars, read off the chart as [high y, low y]
  const bars = [];
  const zone = (x, step, list) => list.forEach((b, i) => bars.push([x + i * step, b[0], b[1]]));
  zone(641.1, 4, [[698,722],[685,733],[683,697],[670,693],[665,687],[637,673],[637,668],[633,648],[635,650],[625,650],[617,650],[598,623],[597,622],[592,615],[590,613],[585,602],[568,587],[507,573],[490,537],[485,510],[484,508],[480,506],[463,503],[478,503],[478,540],[522,542],[517,543],[518,543],[493,533],[486,525],[502,540],[528,545],[528,540],[528,538],[531,552],[545,577],[542,577],[557,578],[577,625],[585,622],[605,627],[597,635],[628,657],[613,642],[628,680],[638,678],[638,677],[635,663],[618,657],[605,623],[588,618],[582,607],[577,597],[542,597],[577,603],[587,627],[605,635],[577,619],[552,585],[556,586],[555,567],[528,557],[529,552],[530,588],[575,612],[587,603],[568,592],[587,617],[587,607],[595,620],[583,605],[582,607],[578,605],[578,632],[577,620],[582,607],[575,618],[607,650],[617,652],[617,643],[619,657]]);
  zone(964.8, 3.98, [[647,713],[685,712],[697,710],[705,732],[697,728],[681,727],[723,767],[753,785],[763,783],[761,792],[757,793],[756,807],[753,792],[738,777],[728,755],[706,733],[713,735],[714,732],[717,752],[737,762],[750,772],[757,779],[742,763],[720,750],[723,748],[747,802],[761,792],[724,762],[714,743],[733,786],[750,786],[738,765],[724,752],[710,737],[727,747],[725,750],[717,737],[714,743],[728,757],[747,775],[760,784],[744,786],[734,759],[726,755],[724,757],[734,757],[734,764],[724,761],[703,727],[674,711],[664,687],[671,683],[670,688],[668,693],[673,702],[692,705],[694,717],[708,727],[708,727],[716,739],[708,739],[733,779],[768,799],[768,832],[758,793],[757,789],[764,789],[768,783],[764,780],[776,805],[797,817],[788,815],[780,805],[792,805],[797,812],[797,818],[810,842],[796,835],[797,817],[808,832],[823,842],[832,862],[846,883],[863,887],[876,903],[896,913],[901,935],[918,938],[926,945],[926,952],[926,942],[894,927],[910,928],[914,937],[923,982],[962,978],[960,977],[966,992],[980,992],[982,1038],[992,1028],[978,1007],[993,1035],[993,1028],[992,1028],[1002,1028],[1002,1028],[1008,1030],[1023,1040],[1037,1055],[1028,1045]]);
  zone(1405.5, 3.98, [[1028,1047],[1019,1037],[1018,1038],[1014,1036],[1022,1042],[1017,1037],[1037,1057],[1042,1060],[1053,1072],[1055,1075],[1055,1078],[1042,1072],[1043,1068],[1036,1066],[1042,1075],[1044,1072],[1044,1085],[1043,1072],[1044,1078],[1044,1092],[1062,1088],[1064,1080],[1050,1083],[1048,1078],[1048,1075],[1048,1070],[1018,1060],[993,1027],[988,1018],[984,1012],[986,1010],[996,1022],[996,1020],[1003,1032],[1012,1033],[1013,1042],[1013,1033],[1027,1040],[1028,1047],[1008,1024],[1010,1024],[1013,1023],[998,1022],[994,1008],[990,1007],[970,995],[964,985],[958,977],[964,977],[943,977],[934,962],[910,939],[908,923],[905,923],[906,929],[892,930],[882,910],[874,900],[882,916],[890,916],[884,900],[888,910],[897,927],[913,930],[916,939],[906,923],[912,920],[906,928],[917,930],[912,926],[917,942],[923,937],[916,932],[922,933],[928,940],[940,967],[948,966],[942,955],[942,956],[952,960],[960,966],[937,970],[937,946],[928,949],[918,933],[918,929],[926,937],[933,942],[927,937],[913,927],[912,922],[912,926],[907,922],[907,917],[898,917],[902,917],[902,913],[903,912],[902,916],[894,907],[872,888],[861,880],[863,873],[862,875],[873,893],[880,892],[870,891],[868,878],[869,885],[864,878],[872,880],[865,878],[863,877],[860,877],[857,868],[865,873],[870,883],[875,888],[872,890],[870,885],[877,888],[870,890],[873,882],[875,888],[870,890],[875,887],[882,895],[885,900],[894,903],[895,913],[903,913],[897,913],[896,907],[902,915],[912,926],[913,926],[925,935],[928,939],[932,942],[936,947],[942,949],[933,945],[930,943],[927,937],[920,928],[917,923],[912,921],[915,923],[920,927],[922,933],[915,927],[913,925],[912,927],[915,932],[913,923],[915,927],[917,928],[922,935],[922,936],[920,930],[917,924],[906,920],[907,922],[917,927],[920,933],[913,923],[913,928],[917,927],[913,927],[917,923],[913,930],[920,925],[913,925],[910,922],[908,920],[917,925],[917,923],[918,933],[922,935],[923,933],[923,933],[918,930],[920,928],[923,932],[920,928],[928,939],[928,938],[933,943],[936,941],[935,943],[936,943],[935,941],[935,943],[930,946],[932,948],[935,947],[936,946],[936,948],[926,943],[928,941],[924,942],[928,940],[927,947],[929,950],[925,947],[922,933]]);
  // last stretch, read at a coarser step
  const tail = [[2200,937,953],[2204,935,947],[2211,937,947],[2217,926,943],[2222,929,942],[2228,924,942],[2232,932,940],[2239,927,947],[2244,929,950],[2248,925,947],[2252,922,933],[2256,907,927],[2261,910,927],[2265,917,927],[2269,919,926],[2274,920,927],[2280,920,925],[2285,910,918],[2288,906,917],[2296,901,915],[2301,905,920],[2305,907,915],[2308,904,912],[2317,908,915],[2321,912,915],[2329,908,913],[2339,904,909],[2345,903,907],[2350,895,903],[2353,888,903],[2357,886,895],[2361,886,895],[2366,886,895],[2373,884,897],[2376,891,902],[2380,889,896],[2384,886,895],[2389,885,895],[2393,889,895],[2397,890,894],[2402,889,894],[2408,887,894],[2412,883,891],[2420,877,886],[2424,873,885],[2429,877,888],[2433,879,892],[2436,879,890],[2441,878,887],[2445,865,885],[2448,862,873],[2452,858,868],[2456,858,870],[2459,863,873],[2463,859,874],[2468,863,868],[2472,858,870],[2476,862,883],[2481,867,882],[2484,863,878],[2489,863,875]];
  for (let x = bars[bars.length - 1][0] + 4; x < 2491; x += 3.98) {
    const i = tail.findIndex(p => p[0] >= x);
    const b = tail[i], a = tail[Math.max(i - 1, 0)];
    const t = a === b ? 0 : (x - a[0]) / (b[0] - a[0]);
    bars.push([x, a[1] + (b[1] - a[1]) * t, a[2] + (b[2] - a[2]) * t]);
  }

  // grid, current price line, bars
  const ys = Array.from({ length: 11 }, (_, i) => 446 + i * 65.9);
  const xs = Array.from({ length: 29 }, (_, i) => 705.8 + i * 63.97);
  document.getElementById("chart").innerHTML =
    `<path d="${xs.map(x => `M${x} 429V1104`).join("")}" stroke="#778899" stroke-width="2" stroke-dasharray="9 7" fill="none"/>` +
    `<path d="${ys.map(y => `M641 ${y}H2499`).join("")}" stroke="#778899" stroke-width="2" stroke-dasharray="7 4.500" fill="none"/>` +
    `<path d="M641 865H2499" stroke="#778899" stroke-width="2"/>` +
    `<path d="${bars.map(b => `M${Math.round(b[0])} ${Math.round(b[1])}V${Math.round(b[2])}`).join("")}" stroke="#6cf02e" stroke-width="2" shape-rendering="crispEdges" fill="none"/>`;
</script>
</body>
</html>
